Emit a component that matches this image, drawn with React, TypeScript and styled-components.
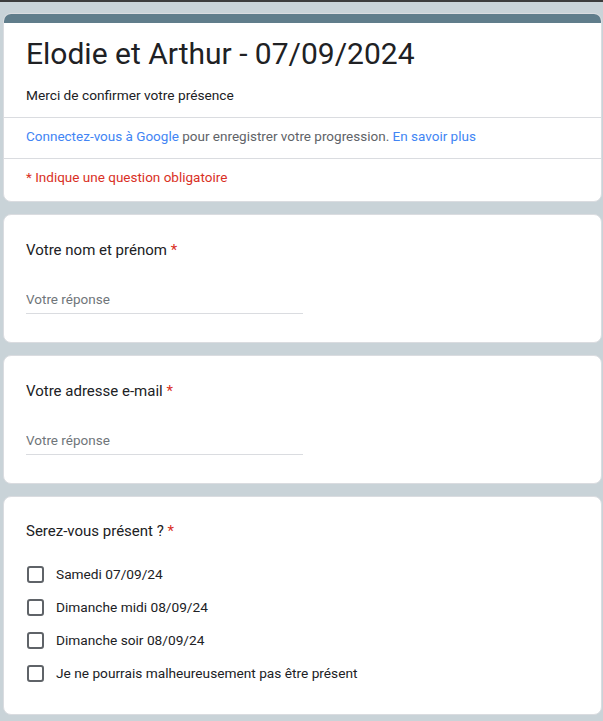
import React from "react";
import styled, { createGlobalStyle } from "styled-components";

const GlobalStyle = createGlobalStyle`
  html, body {
    margin: 0;
    padding: 0;
    background: #c9d3d8;
    font-family: Roboto, "Liberation Sans", Arial, sans-serif;
    color: #202124;
  }
  * { box-sizing: border-box; }
`;

const Page = styled.div`
  min-height: 721px;
  background: #c9d3d8;
  display: flex;
  flex-direction: column;
`;

const TopStrip = styled.div`
  height: 2px;
  background: #3c3c3c;
`;

const Column = styled.div`
  display: flex;
  flex-direction: column;
  gap: 12px;
  padding: 11px 1px 12px 3px;
`;

const Card = styled.div`
  background: #fff;
  border: 1px solid #dadce0;
  border-radius: 8px;
  overflow: hidden;
  display: flex;
  flex-direction: column;
`;

const Band = styled.div`
  height: 10px;
  background: #607d8b;
  margin: -1px -1px 0;
`;

const Section = styled.div<{ $pt: number; $pb: number }>`
  padding: ${(p) => p.$pt}px 22px ${(p) => p.$pb}px;
  display: flex;
  flex-direction: column;
`;

const Divider = styled.div`
  height: 1px;
  background: #dadce0;
`;

const Title = styled.h1`
  margin: 0;
  font-size: 30px;
  line-height: 40px;
  font-weight: 400;
  color: #202124;
`;

const Description = styled.p`
  margin: 11px 0 0;
  font-size: 13.7px;
  line-height: 20px;
  color: #202124;
`;

const SmallText = styled.p<{ $color?: string }>`
  margin: 0;
  font-size: 13.5px;
  line-height: 20px;
  color: ${(p) => p.$color || "#5f6368"};
`;

const Link = styled.a`
  color: #4285f4;
  text-decoration: none;
`;

const Question = styled.div`
  font-size: 15px;
  line-height: 24px;
  color: #202124;
`;

const Star = styled.span`
  color: #d93025;
`;

const QuestionCard = styled.div<{ $pt: number; $pb: number }>`
  padding: ${(p) => p.$pt}px 22px ${(p) => p.$pb}px;
  display: flex;
  flex-direction: column;
`;

const AnswerInput = styled.input`
  margin-top: 27px;
  width: 50%;
  height: 25px;
  padding: 0 0 4px;
  border: none;
  border-bottom: 1px solid #dadce0;
  outline: none;
  background: transparent;
  font-family: Roboto, "Liberation Sans", Arial, sans-serif;
  font-size: 13.5px;
  color: #202124;
  &::placeholder {
    color: #70757a;
  }
`;

const Options = styled.div`
  margin-top: 21px;
  display: flex;
  flex-direction: column;
  gap: 13px;
`;

const Option = styled.label`
  display: flex;
  align-items: center;
  gap: 12px;
  min-height: 20px;
  font-size: 13.7px;
  line-height: 20px;
  color: #202124;
`;

const Box = styled.span`
  width: 17px;
  height: 17px;
  margin-left: 1px;
  border: 2px solid #5f6368;
  border-radius: 3px;
  flex-shrink: 0;
`;

const options = [
  "Samedi 07/09/24",
  "Dimanche midi 08/09/24",
  "Dimanche soir 08/09/24",
  "Je ne pourrais malheureusement pas être présent",
];

export default function App() {
  return (
    <Page>
      <GlobalStyle />
      <TopStrip />
      <Column>
        <Card>
          <Band />
          <Section $pt={11} $pb={12}>
            <Title>Elodie et Arthur - 07/09/2024</Title>
            <Description>Merci de confirmer votre présence</Description>
          </Section>
          <Divider />
          <Section $pt={8} $pb={12}>
            <SmallText>
              <Link href="#">Connectez-vous à Google</Link> pour enregistrer votre progression.{" "}
              <Link href="#">En savoir plus</Link>
            </SmallText>
          </Section>
          <Divider />
          <Section $pt={8} $pb={14}>
            <SmallText $color="#d93025">* Indique une question obligatoire</SmallText>
          </Section>
        </Card>

        <Card>
          <QuestionCard $pt={23} $pb={28}>
            <Question>
              Votre nom et prénom <Star>*</Star>
            </Question>
            <AnswerInput placeholder="Votre réponse" />
          </QuestionCard>
        </Card>

        <Card>
          <QuestionCard $pt={23} $pb={28}>
            <Question>
              Votre adresse e-mail <Star>*</Star>
            </Question>
            <AnswerInput placeholder="Votre réponse" />
          </QuestionCard>
        </Card>

        <Card>
          <QuestionCard $pt={22} $pb={31}>
            <Question>
              Serez-vous présent ? <Star>*</Star>
            </Question>
            <Options>
              {options.map((o) => (
                <Option key={o}>
                  <Box />
                  {o}
                </Option>
              ))}
            </Options>
          </QuestionCard>
        </Card>
      </Column>
    </Page>
  );
}
